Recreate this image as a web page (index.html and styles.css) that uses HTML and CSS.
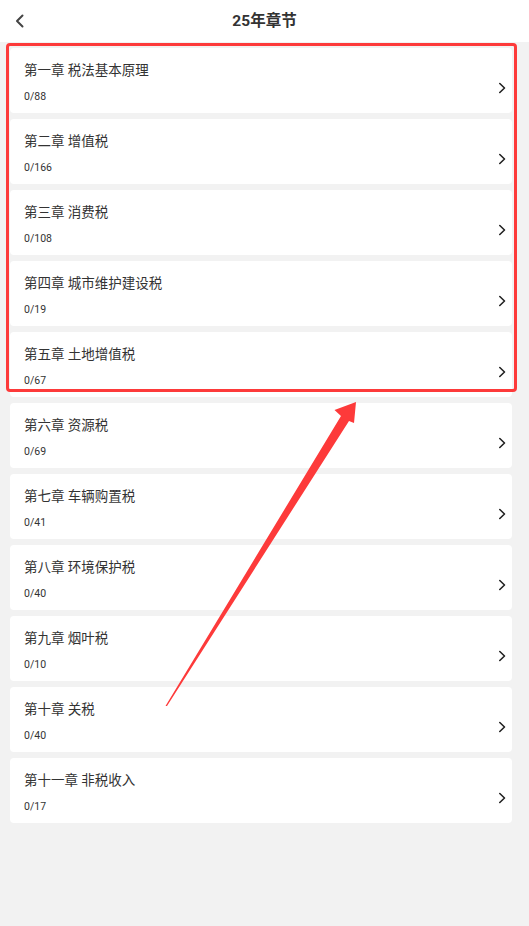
FILE: index.html
```html
<!DOCTYPE html>
<html lang="zh">
<head>
<meta charset="utf-8">
<title>25年章节</title>
<link rel="stylesheet" href="styles.css">
</head>
<body>
<div class="page">
  <header class="topbar">
    <svg class="back" width="10" height="14" viewBox="0 0 10 14"><path d="M7.5 1.5 L2 7 L7.5 12.5" fill="none" stroke="#444" stroke-width="2" stroke-linecap="round" stroke-linejoin="round"/></svg>
    <h1 class="title">25年章节</h1>
  </header>
  <main class="list">
    <div class="card"><div class="info"><div class="name">第一章 税法基本原理</div><div class="count">0/88</div></div><svg class="chev" width="8" height="12" viewBox="0 0 8 12"><path d="M1.8 1.5 L6.5 6 L1.8 10.5" fill="none" stroke="#222" stroke-width="1.6" stroke-linecap="round" stroke-linejoin="round"/></svg></div>
    <div class="card"><div class="info"><div class="name">第二章 增值税</div><div class="count">0/166</div></div><svg class="chev" width="8" height="12" viewBox="0 0 8 12"><path d="M1.8 1.5 L6.5 6 L1.8 10.5" fill="none" stroke="#222" stroke-width="1.6" stroke-linecap="round" stroke-linejoin="round"/></svg></div>
    <div class="card"><div class="info"><div class="name">第三章 消费税</div><div class="count">0/108</div></div><svg class="chev" width="8" height="12" viewBox="0 0 8 12"><path d="M1.8 1.5 L6.5 6 L1.8 10.5" fill="none" stroke="#222" stroke-width="1.6" stroke-linecap="round" stroke-linejoin="round"/></svg></div>
    <div class="card"><div class="info"><div class="name">第四章 城市维护建设税</div><div class="count">0/19</div></div><svg class="chev" width="8" height="12" viewBox="0 0 8 12"><path d="M1.8 1.5 L6.5 6 L1.8 10.5" fill="none" stroke="#222" stroke-width="1.6" stroke-linecap="round" stroke-linejoin="round"/></svg></div>
    <div class="card"><div class="info"><div class="name">第五章 土地增值税</div><div class="count">0/67</div></div><svg class="chev" width="8" height="12" viewBox="0 0 8 12"><path d="M1.8 1.5 L6.5 6 L1.8 10.5" fill="none" stroke="#222" stroke-width="1.6" stroke-linecap="round" stroke-linejoin="round"/></svg></div>
    <div class="card"><div class="info"><div class="name">第六章 资源税</div><div class="count">0/69</div></div><svg class="chev" width="8" height="12" viewBox="0 0 8 12"><path d="M1.8 1.5 L6.5 6 L1.8 10.5" fill="none" stroke="#222" stroke-width="1.6" stroke-linecap="round" stroke-linejoin="round"/></svg></div>
    <div class="card"><div class="info"><div class="name">第七章 车辆购置税</div><div class="count">0/41</div></div><svg class="chev" width="8" height="12" viewBox="0 0 8 12"><path d="M1.8 1.5 L6.5 6 L1.8 10.5" fill="none" stroke="#222" stroke-width="1.6" stroke-linecap="round" stroke-linejoin="round"/></svg></div>
    <div class="card"><div class="info"><div class="name">第八章 环境保护税</div><div class="count">0/40</div></div><svg class="chev" width="8" height="12" viewBox="0 0 8 12"><path d="M1.8 1.5 L6.5 6 L1.8 10.5" fill="none" stroke="#222" stroke-width="1.6" stroke-linecap="round" stroke-linejoin="round"/></svg></div>
    <div class="card"><div class="info"><div class="name">第九章 烟叶税</div><div class="count">0/10</div></div><svg class="chev" width="8" height="12" viewBox="0 0 8 12"><path d="M1.8 1.5 L6.5 6 L1.8 10.5" fill="none" stroke="#222" stroke-width="1.6" stroke-linecap="round" stroke-linejoin="round"/></svg></div>
    <div class="card"><div class="info"><div class="name">第十章 关税</div><div class="count">0/40</div></div><svg class="chev" width="8" height="12" viewBox="0 0 8 12"><path d="M1.8 1.5 L6.5 6 L1.8 10.5" fill="none" stroke="#222" stroke-width="1.6" stroke-linecap="round" stroke-linejoin="round"/></svg></div>
    <div class="card"><div class="info"><div class="name">第十一章 非税收入</div><div class="count">0/17</div></div><svg class="chev" width="8" height="12" viewBox="0 0 8 12"><path d="M1.8 1.5 L6.5 6 L1.8 10.5" fill="none" stroke="#222" stroke-width="1.6" stroke-linecap="round" stroke-linejoin="round"/></svg></div>
  </main>
  <div class="highlight"></div>
  <svg class="arrow" width="529" height="926" viewBox="0 0 529 926">
    <polygon points="165.5,706 341,416 334.5,410 356,402 354,423 349,421 167,706" fill="#fd3a3a"/>
  </svg>
</div>
</body>
</html>
```

FILE: styles.css
```css
html, body {
  margin: 0;
  padding: 0;
}
body {
  background: #f2f2f2;
  font-family: Roboto, "Noto Sans CJK SC", "Noto Sans", sans-serif;
  color: #333;
}
.page {
  position: relative;
  width: 529px;
  min-height: 926px;
}
.topbar {
  height: 42px;
  background: #fff;
  display: flex;
  align-items: center;
  justify-content: center;
  position: relative;
}
.back {
  position: absolute;
  left: 15px;
  top: 13.5px;
}
.title {
  margin: 0;
  font-size: 15.5px;
  font-weight: 700;
  color: #333;
  line-height: 20px;
}
.list {
  padding: 6px 17px 0 10px;
  display: flex;
  flex-direction: column;
  gap: 6px;
}
.card {
  height: 65px;
  background: #fff;
  border-radius: 4px;
  display: flex;
  justify-content: space-between;
  padding: 0 6px 0 14px;
  box-sizing: border-box;
}
.info {
  padding-top: 12px;
}
.name {
  font-size: 13.5px;
  line-height: 20px;
  color: #333;
}
.count {
  margin-top: 10px;
  font-size: 10.5px;
  line-height: 14px;
  color: #333;
}
.chev {
  margin-top: 34px;
}
.highlight {
  position: absolute;
  left: 6px;
  top: 43px;
  width: 511px;
  height: 349px;
  box-sizing: border-box;
  border: 3px solid #fd3a3a;
  border-radius: 4px;
}
.arrow {
  position: absolute;
  left: 0;
  top: 0;
}
```
